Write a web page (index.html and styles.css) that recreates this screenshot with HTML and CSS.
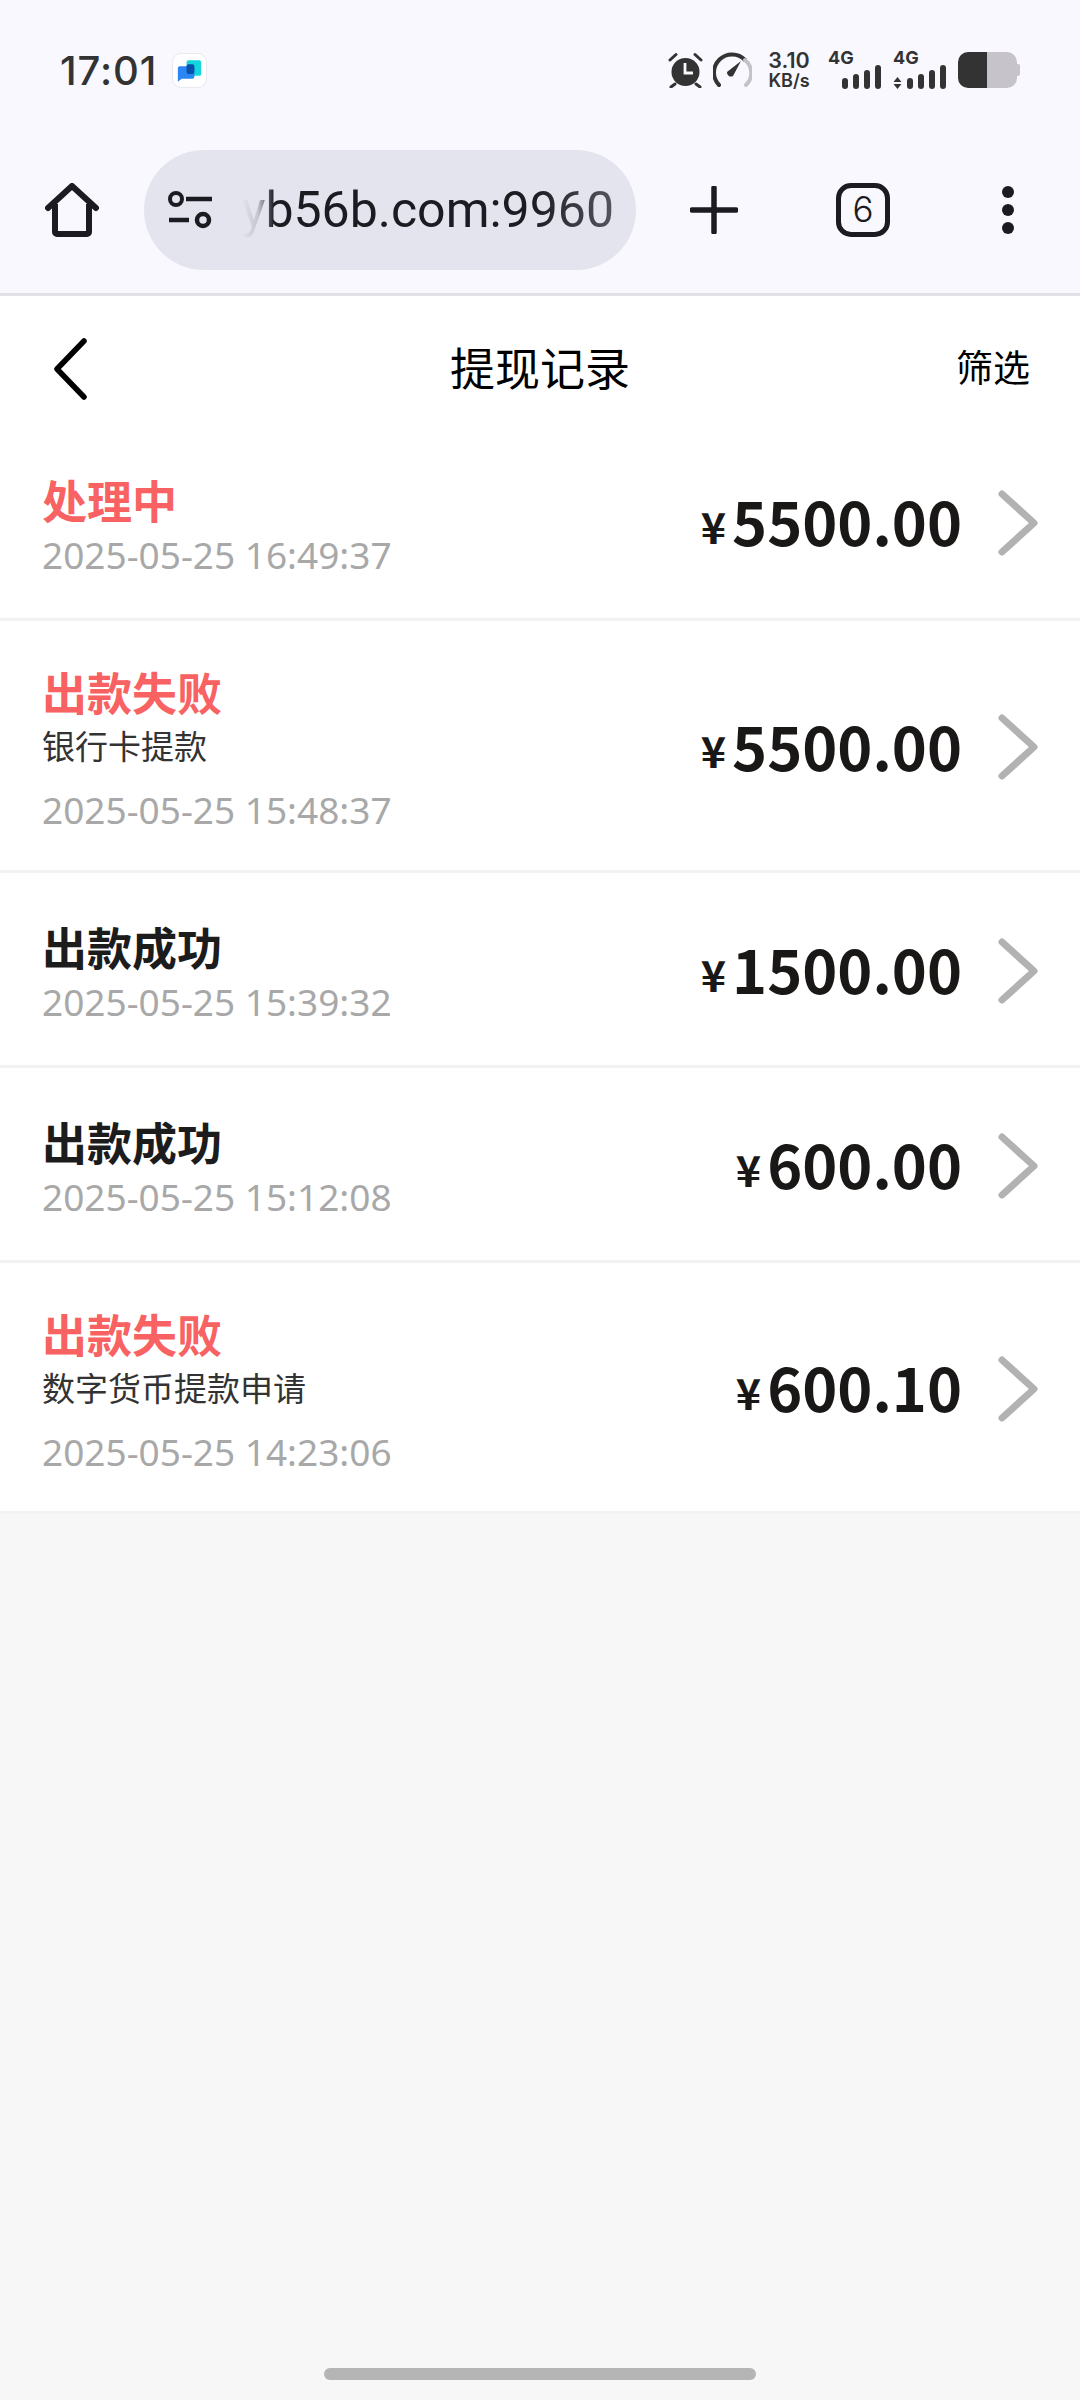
FILE: index.html
```html
<!DOCTYPE html>
<html lang="zh-CN">
<head>
<meta charset="utf-8">
<title>提现记录</title>
<link rel="stylesheet" href="styles.css">
</head>
<body>
<div class="chrome">
  <div class="status">
    <div class="status-left">
      <span class="clock">17:01</span>
      <span class="app-badge">
        <svg viewBox="0 0 34 34" width="34" height="34">
          <path d="M14 8a2 2 0 0 1 2-2h11a2 2 0 0 1 2 2v12a2 2 0 0 1-2 2h-13z" fill="#12d6dc"/>
          <path d="M5 14a2 2 0 0 1 2-2h13a2 2 0 0 1 2 2v9a2 2 0 0 1-2 2H9l-4 3z" fill="#2a86f5"/>
          <rect x="14" y="10" width="8" height="10" rx="2" fill="#0a4fa8"/>
        </svg>
      </span>
    </div>
    <div class="status-right">
      <svg class="ic-alarm" viewBox="0 0 35 36" width="35" height="36">
        <circle cx="17.500" cy="20" r="14" fill="#333"/>
        <path d="M17 11v10h8" fill="none" stroke="#f8f8fe" stroke-width="2.800"/>
        <path d="M2 8l6-5.500M33 8l-6-5.500M7 32l-4 3M28 32l4 3" stroke="#333" stroke-width="3" stroke-linecap="round"/>
      </svg>
      <svg class="ic-speed" viewBox="0 0 39 36" width="39" height="36">
        <path d="M6 33A16.500 16.500 0 0 1 32 8" fill="none" stroke="#333" stroke-width="4" stroke-linecap="round"/>
        <path d="M32 8A16.500 16.500 0 0 1 33 33" fill="none" stroke="#c4c2c8" stroke-width="4" stroke-linecap="round"/>
        <path d="M28 9L20 24a4 4 0 0 1-6-4z" fill="#333"/>
      </svg>
      <div class="speed"><span>3.10</span><span>KB/s</span></div>
      <div class="sim">
        <span class="sim-tag">4G</span>
        <div class="bars"><i class="b1"></i><i class="b2"></i><i class="b3"></i><i class="b4"></i></div>
      </div>
      <div class="sim sim-data">
        <span class="sim-tag">4G</span>
        <div class="bars">
          <svg class="updown" viewBox="0 0 9 12" width="9" height="12"><path d="M4.500 0l4 5h-8zM4.500 12l4-5h-8z" fill="#333"/></svg>
          <i class="b1"></i><i class="b2"></i><i class="b3"></i><i class="b4"></i>
        </div>
      </div>
      <div class="battery"><div class="battery-level"></div><div class="battery-cap"></div></div>
    </div>
  </div>
  <div class="toolbar">
    <svg class="home" viewBox="0 0 54 54" width="54" height="54">
      <path d="M3 25L27 3l24 22" fill="none" stroke="#1b1b21" stroke-width="6" stroke-linecap="round" stroke-linejoin="round"/>
      <path d="M10 21v28a2 2 0 0 0 2 2h30a2 2 0 0 0 2-2V21" fill="none" stroke="#1b1b21" stroke-width="6"/>
    </svg>
    <div class="omnibox">
      <svg class="tune" viewBox="0 0 46 38" width="46" height="38">
        <circle cx="8" cy="8" r="6" fill="none" stroke="#1b1b21" stroke-width="4"/>
        <path d="M18 8h26M1 29h20" stroke="#1b1b21" stroke-width="4.500"/>
        <circle cx="35" cy="29" r="6" fill="none" stroke="#1b1b21" stroke-width="4.500"/>
      </svg>
      <div class="url"><span class="url-text">yb56b.com:9960</span></div>
    </div>
    <svg class="plus" viewBox="0 0 48 48" width="48" height="48">
      <path d="M24 2v44M2 24h44" stroke="#1b1b21" stroke-width="5.500" stroke-linecap="round"/>
    </svg>
    <div class="tabs">6</div>
    <div class="more"><i></i><i></i><i></i></div>
  </div>
</div>

<header class="page-head">
  <svg class="back" viewBox="0 0 36 62" width="36" height="62">
    <path d="M32 3L5 31l27 28" fill="none" stroke="#000" stroke-width="5.500" stroke-linecap="round" stroke-linejoin="round"/>
  </svg>
  <h1>提现记录</h1>
  <span class="filter">筛选</span>
</header>

<main class="list">
  <section class="row row-short">
    <div class="info">
      <div class="state state-red">处理中</div>
      <div class="time">2025-05-25 16:49:37</div>
    </div>
    <div class="amount"><small>¥</small>5500.00</div>
    <svg class="chev" viewBox="0 0 40 66" width="40" height="66"><path d="M4 4l32 29L4 62" fill="none" stroke="#b2b2b2" stroke-width="7" stroke-linecap="round" stroke-linejoin="round"/></svg>
  </section>
  <section class="row row-tall">
    <div class="info">
      <div class="state state-red">出款失败</div>
      <div class="note">银行卡提款</div>
      <div class="time">2025-05-25 15:48:37</div>
    </div>
    <div class="amount"><small>¥</small>5500.00</div>
    <svg class="chev" viewBox="0 0 40 66" width="40" height="66"><path d="M4 4l32 29L4 62" fill="none" stroke="#b2b2b2" stroke-width="7" stroke-linecap="round" stroke-linejoin="round"/></svg>
  </section>
  <section class="row row-short">
    <div class="info">
      <div class="state">出款成功</div>
      <div class="time">2025-05-25 15:39:32</div>
    </div>
    <div class="amount"><small>¥</small>1500.00</div>
    <svg class="chev" viewBox="0 0 40 66" width="40" height="66"><path d="M4 4l32 29L4 62" fill="none" stroke="#b2b2b2" stroke-width="7" stroke-linecap="round" stroke-linejoin="round"/></svg>
  </section>
  <section class="row row-short">
    <div class="info">
      <div class="state">出款成功</div>
      <div class="time">2025-05-25 15:12:08</div>
    </div>
    <div class="amount"><small>¥</small>600.00</div>
    <svg class="chev" viewBox="0 0 40 66" width="40" height="66"><path d="M4 4l32 29L4 62" fill="none" stroke="#b2b2b2" stroke-width="7" stroke-linecap="round" stroke-linejoin="round"/></svg>
  </section>
  <section class="row row-tall">
    <div class="info">
      <div class="state state-red">出款失败</div>
      <div class="note">数字货币提款申请</div>
      <div class="time">2025-05-25 14:23:06</div>
    </div>
    <div class="amount"><small>¥</small>600.10</div>
    <svg class="chev" viewBox="0 0 40 66" width="40" height="66"><path d="M4 4l32 29L4 62" fill="none" stroke="#b2b2b2" stroke-width="7" stroke-linecap="round" stroke-linejoin="round"/></svg>
  </section>
</main>

<div class="home-bar"><span></span></div>
</body>
</html>
```

FILE: styles.css
```css
* { box-sizing: border-box; }
html, body { margin: 0; padding: 0; }
body {
  width: 1080px;
  height: 2400px;
  background: #f7f7f7;
  font-family: "Noto Sans CJK SC", "Noto Sans", sans-serif;
  display: flex;
  flex-direction: column;
  overflow: hidden;
}

/* browser chrome */
.chrome {
  height: 296px;
  background: #f8f8fe;
  border-bottom: 3px solid #e1e1e7;
  display: flex;
  flex-direction: column;
  flex: none;
}
.status {
  height: 150px;
  padding: 0 60px 10px 60px;
  display: flex;
  align-items: center;
  justify-content: space-between;
}
.status-left { display: flex; align-items: center; gap: 15px; }
.clock {
  font-family: "Inter", "Noto Sans", sans-serif;
  font-size: 40px;
  font-weight: 500;
  color: #333;
  letter-spacing: 0.9px;
}
.app-badge {
  width: 35px;
  height: 35px;
  border: 1px solid #e9e9ee;
  border-radius: 9px;
  background: #fff;
  display: flex;
}
.status-right { display: flex; align-items: center; }
.ic-speed { margin-left: 10px; }
.speed {
  width: 44px;
  display: flex;
  flex-direction: column;
  align-items: center;
  font-family: "Inter", "Noto Sans", sans-serif;
  font-weight: 600;
  color: #333;
  margin-left: 15px;
}
.speed span:first-child { font-size: 21.500px; line-height: 22px; }
.speed span:last-child { font-size: 18px; line-height: 20px; }
.sim { position: relative; width: 53px; height: 38px; margin-left: 17px; display: flex; align-items: flex-end; justify-content: flex-end; }
.sim-data { margin-left: 12px; }
.sim-tag {
  position: absolute;
  left: 0;
  top: -3px;
  font-family: "Inter", "Noto Sans", sans-serif;
  font-size: 18px;
  font-weight: 700;
  color: #333;
  line-height: 20px;
}
.bars { display: flex; align-items: flex-end; gap: 5px; }
.bars i { display: block; width: 6px; border-radius: 3px; background: #333; }
.bars .b1 { height: 11px; }
.bars .b2 { height: 15px; }
.bars .b3 { height: 19px; }
.bars .b4 { height: 24px; }
.battery { display: flex; align-items: center; margin-left: 12px; }
.battery-level {
  width: 59px;
  height: 36px;
  border-radius: 10px;
  background: linear-gradient(90deg, #333 0 49%, #c6c4ca 49% 100%);
}
.battery-cap { width: 3px; height: 12px; background: #c6c4ca; border-radius: 0 2px 2px 0; }

.toolbar {
  height: 120px;
  padding: 0 0 0 45px;
  display: flex;
  align-items: center;
}
.home { flex: none; margin: 0 45px 0 0; }
.omnibox {
  flex: none;
  width: 492px;
  height: 120px;
  border-radius: 60px;
  background: #e3e4ee;
  padding: 0 22px 0 24px;
  display: flex;
  align-items: center;
  gap: 8px;
}
.tune { flex: none; }
.url { flex: 1; overflow: hidden; display: flex; justify-content: flex-end; }
.url-text {
  font-family: "Roboto", "Noto Sans", sans-serif;
  font-size: 50px;
  font-weight: 400;
  white-space: nowrap;
  margin-left: -60px;
  background: linear-gradient(90deg, #e3e4ee 0, #c4c5cf 16px, #1b1b21 32px, #1b1b21 78%, #55555e 100%);
  -webkit-background-clip: text;
  background-clip: text;
  -webkit-text-fill-color: transparent;
}
.plus { flex: none; margin-left: 54px; }
.tabs {
  flex: none;
  width: 54px;
  height: 54px;
  margin-left: 98px;
  border: 5.500px solid #1b1b21;
  border-radius: 15px;
  font-family: "Inter", "Noto Sans", sans-serif;
  font-size: 35px;
  font-weight: 300;
  line-height: 42px;
  text-align: center;
  color: #1b1b21;
}
.more {
  flex: none;
  margin-left: 112px;
  display: flex;
  flex-direction: column;
  gap: 6px;
}
.more i { display: block; width: 12px; height: 12px; border-radius: 50%; background: #1b1b21; }

/* page header */
.page-head {
  height: 136px;
  flex: none;
  background: #fff;
  padding: 4px 50px 0 52px;
  display: flex;
  align-items: center;
  justify-content: space-between;
  position: relative;
}
.back { margin-top: 6px; }
.page-head h1 {
  position: absolute;
  left: 0;
  right: 0;
  margin: 0;
  text-align: center;
  font-size: 45px;
  font-weight: 400;
  color: #000;
  pointer-events: none;
}
.filter { font-size: 37px; color: #000; }

/* withdrawal rows */
.list { flex: none; background: #fff; }
.row {
  display: flex;
  align-items: center;
  padding: 0 42px 0 42px;
  border-bottom: 3px solid #f2f2f2;
}
.row-short { height: 195px; }
.row-tall { height: 251px; }
.row:first-child { height: 189px; }
.row:nth-child(2) { height: 252px; }
.info { flex: 1; }
.row-short .info { margin-top: 13px; }
.row:first-child .info { margin-top: 7px; }
.row-tall .info { margin-top: 17px; }
.row:first-child .amount { margin-bottom: 8px; }
.row:first-child .chev { margin-bottom: 4px; }
.row-short .chev { margin-top: 3px; }
.row:first-child .chev { margin-top: 0; }
.row-tall .chev { margin-top: 3px; }
.state {
  font-size: 45px;
  font-weight: 700;
  line-height: 52px;
  color: #1c1c1c;
}
.state-red { color: #f96262; }
.note { font-size: 33px; line-height: 55px; color: #333; }
.time {
  font-family: "Noto Sans", sans-serif;
  font-size: 37px;
  line-height: 58px;
  color: #a8a8a8;
}
.row-tall .time { line-height: 64px; margin-top: 5px; }
.amount {
  font-size: 59.500px;
  font-weight: 700;
  color: #1a1717;
  line-height: 1;
  display: flex;
  align-items: center;
}
.amount small { font-size: 43px; margin: 8px 6px 0 0; font-weight: 700; }
.chev { flex: none; margin-left: 36px; }

/* gesture bar */
.home-bar { flex: 1; position: relative; }
.home-bar span {
  position: absolute;
  left: 324px;
  bottom: 20px;
  width: 432px;
  height: 12px;
  border-radius: 6px;
  background: #b5b5b5;
}
```
